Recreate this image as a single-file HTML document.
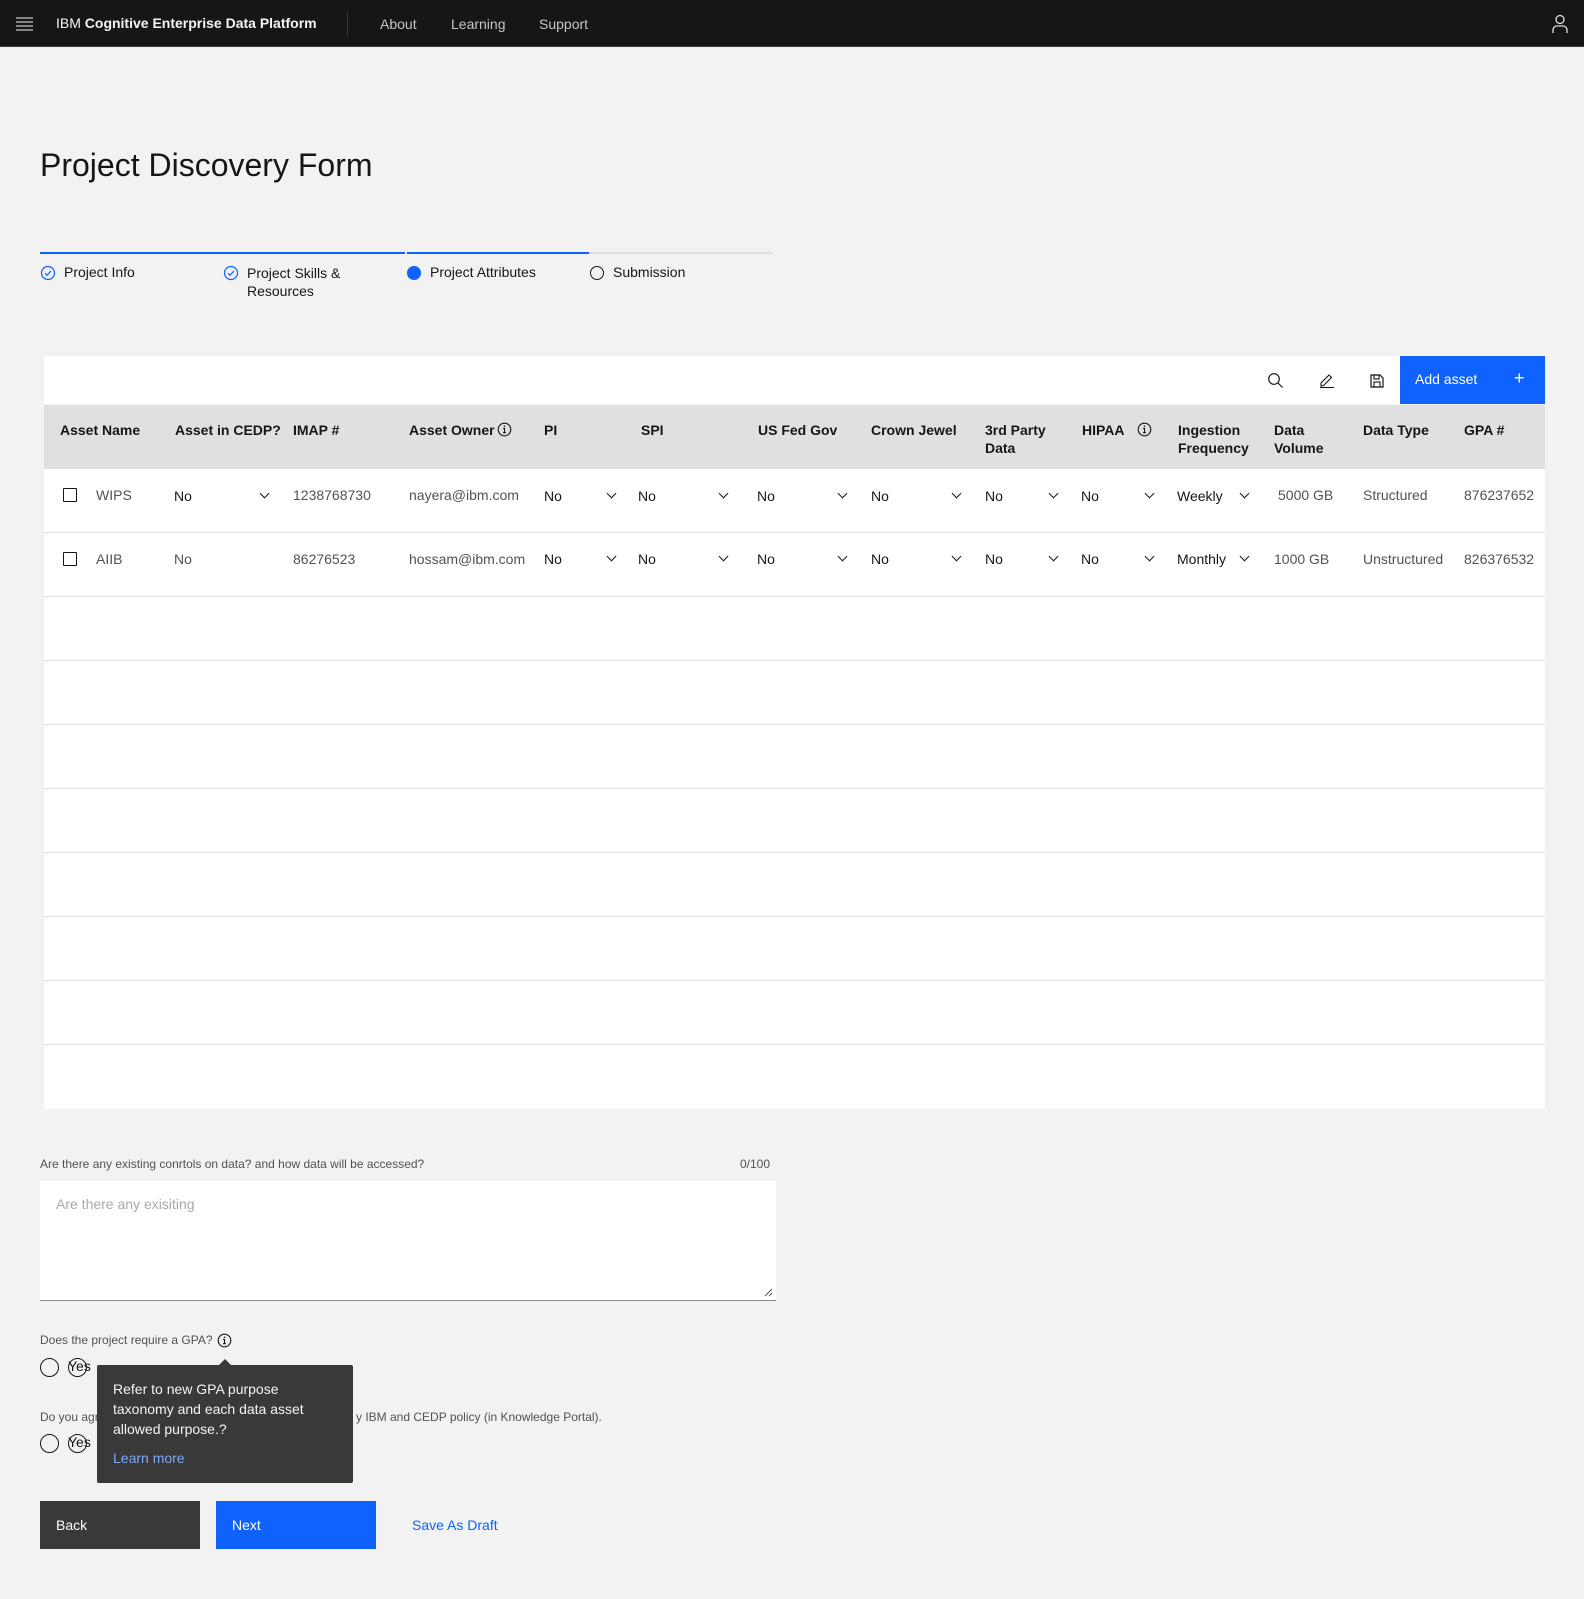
<!DOCTYPE html>
<html><head><meta charset="utf-8"><style>
*{box-sizing:border-box;margin:0;padding:0}
body{width:1584px;height:1599px;background:#f2f2f2;font-family:"Liberation Sans",sans-serif;color:#161616;position:relative;overflow:hidden}
.a{position:absolute;white-space:nowrap}
.hdr{position:absolute;left:0;top:0;width:1584px;height:47px;background:#161616;border-bottom:1px solid #393939}
.nav{color:#c6c6c6;font-size:14px;top:16px}
.th{font-size:14px;font-weight:bold;color:#161616;line-height:18px}
.td{font-size:14px;color:#525252}
.dd{font-size:14px;color:#161616}
.chev{position:absolute;width:7px;height:7px;border-right:1.3px solid #161616;border-bottom:1.3px solid #161616;transform:rotate(45deg)}
.row{position:absolute;left:44px;width:1501px;height:64px;background:#fff;border-bottom:1px solid #e0e0e0}
.cb{position:absolute;width:14px;height:14px;border:1.5px solid #161616;border-radius:1px}
.radio{position:absolute;width:19px;height:19px;border:1.5px solid #161616;border-radius:50%}
</style></head><body>
<div class="hdr">
 <svg class="a" style="left:16px;top:17px" width="18" height="14"><g stroke="#c6c6c6" stroke-width="1.2"><line x1="0" y1="1" x2="17" y2="1"/><line x1="0" y1="5" x2="17" y2="5"/><line x1="0" y1="9" x2="17" y2="9"/><line x1="0" y1="13" x2="17" y2="13"/></g></svg>
 <div class="a" style="left:56px;top:15px;color:#f4f4f4;font-size:14px">IBM <b>Cognitive Enterprise Data Platform</b></div>
 <div class="a" style="left:347px;top:12px;width:1px;height:24px;background:#393939"></div>
 <div class="a nav" style="left:380px">About</div>
 <div class="a nav" style="left:451px">Learning</div>
 <div class="a nav" style="left:539px">Support</div>
 <svg class="a" style="left:1551px;top:14px" width="18" height="20"><g fill="none" stroke="#e0e0e0" stroke-width="1.3"><circle cx="9" cy="5.5" r="4"/><path d="M2 19 v-3 a4 4 0 0 1 4-4 h6 a4 4 0 0 1 4 4 v3"/></g></svg>
</div>

<div class="a" style="left:40px;top:147px;font-size:32px;color:#161616">Project Discovery Form</div>

<div class="a" style="left:40px;top:252px;width:733px;height:2px;background:#e0e0e0"></div>
<div class="a" style="left:40px;top:252px;width:549px;height:2px;background:#0f62fe"></div>
<div class="a" style="left:405px;top:252px;width:2px;height:2px;background:#f2f2f2"></div>
<svg class="a" style="left:40px;top:265px" width="16" height="16"><circle cx="8" cy="8" r="6.5" fill="none" stroke="#0f62fe" stroke-width="1.2"/><path d="M5 8.3l2 2 4-4.2" fill="none" stroke="#0f62fe" stroke-width="1.2"/></svg>
<div class="a" style="left:64px;top:264px;font-size:14px">Project Info</div>
<svg class="a" style="left:223px;top:265px" width="16" height="16"><circle cx="8" cy="8" r="6.5" fill="none" stroke="#0f62fe" stroke-width="1.2"/><path d="M5 8.3l2 2 4-4.2" fill="none" stroke="#0f62fe" stroke-width="1.2"/></svg>
<div class="a" style="left:247px;top:264px;font-size:14px;line-height:18px">Project Skills &amp;<br>Resources</div>
<div class="a" style="left:407px;top:266px;width:14px;height:14px;border-radius:50%;background:#0f62fe"></div>
<div class="a" style="left:430px;top:264px;font-size:14px">Project Attributes</div>
<div class="a" style="left:590px;top:266px;width:14px;height:14px;border-radius:50%;border:1.3px solid #161616"></div>
<div class="a" style="left:613px;top:264px;font-size:14px">Submission</div>

<div class="a" style="left:44px;top:356px;width:1501px;height:48px;background:#fff"></div>
<svg class="a" style="left:1267px;top:372px" width="18" height="18"><circle cx="7" cy="7" r="5.3" fill="none" stroke="#161616" stroke-width="1.2"/><line x1="11" y1="11" x2="15.5" y2="15.5" stroke="#161616" stroke-width="1.2"/></svg>
<svg class="a" style="left:1318px;top:371px" width="18" height="18"><path d="M3 12 L11 4 L13.5 6.5 L5.5 14.5 L3 15 Z" fill="none" stroke="#161616" stroke-width="1.1"/><line x1="2" y1="16.5" x2="16" y2="16.5" stroke="#161616" stroke-width="1.1"/></svg>
<svg class="a" style="left:1369px;top:373px" width="16" height="16"><path d="M2 2h9l3 3v9H2z" fill="none" stroke="#161616" stroke-width="1.2"/><rect x="5" y="2" width="5" height="4" fill="none" stroke="#161616" stroke-width="1.1"/><rect x="5" y="9" width="6" height="5" fill="none" stroke="#161616" stroke-width="1.1"/></svg>
<div class="a" style="left:1400px;top:356px;width:145px;height:48px;background:#0f62fe"></div>
<div class="a" style="left:1415px;top:371px;font-size:14px;color:#fff">Add asset</div>
<div class="a" style="left:1514px;top:368px;font-size:18px;color:#fff;font-weight:300">+</div>

<div class="a" style="left:44px;top:405px;width:1501px;height:64px;background:#e0e0e0"></div>
<div class="a th" style="left:60px;top:421px">Asset Name</div>
<div class="a th" style="left:175px;top:421px">Asset in CEDP?</div>
<div class="a th" style="left:293px;top:421px">IMAP #</div>
<div class="a th" style="left:409px;top:421px">Asset Owner</div>
<svg class="a" style="left:497px;top:422px" width="15" height="15"><circle cx="7.5" cy="7.5" r="6.3" fill="none" stroke="#161616" stroke-width="1.1"/><path d="M6 6.5h1.5v4M6 10.7h3" fill="none" stroke="#161616" stroke-width="1.1"/><circle cx="7.5" cy="4.3" r=".8" fill="#161616"/></svg>
<div class="a th" style="left:544px;top:421px">PI</div>
<div class="a th" style="left:641px;top:421px">SPI</div>
<div class="a th" style="left:758px;top:421px">US Fed Gov</div>
<div class="a th" style="left:871px;top:421px">Crown Jewel</div>
<div class="a th" style="left:985px;top:421px">3rd Party<br>Data</div>
<div class="a th" style="left:1082px;top:421px">HIPAA</div>
<svg class="a" style="left:1137px;top:422px" width="15" height="15"><circle cx="7.5" cy="7.5" r="6.3" fill="none" stroke="#161616" stroke-width="1.1"/><path d="M6 6.5h1.5v4M6 10.7h3" fill="none" stroke="#161616" stroke-width="1.1"/><circle cx="7.5" cy="4.3" r=".8" fill="#161616"/></svg>
<div class="a th" style="left:1178px;top:421px">Ingestion<br>Frequency</div>
<div class="a th" style="left:1274px;top:421px">Data<br>Volume</div>
<div class="a th" style="left:1363px;top:421px">Data Type</div>
<div class="a th" style="left:1464px;top:421px">GPA #</div>

<div class="row" style="top:469px"></div>
<div class="row" style="top:533px"></div>
<div class="row" style="top:597px"></div>
<div class="row" style="top:661px"></div>
<div class="row" style="top:725px"></div>
<div class="row" style="top:789px"></div>
<div class="row" style="top:853px"></div>
<div class="row" style="top:917px"></div>
<div class="row" style="top:981px"></div>
<div class="row" style="top:1045px;border-bottom:none"></div>

<div class="cb" style="left:63px;top:488px"></div>
<div class="a td" style="left:96px;top:487px">WIPS</div>
<div class="a dd" style="left:174px;top:488px">No</div><div class="chev" style="left:261px;top:490px"></div>
<div class="a td" style="left:293px;top:487px">1238768730</div>
<div class="a td" style="left:409px;top:487px">nayera@ibm.com</div>
<div class="a dd" style="left:544px;top:488px">No</div><div class="chev" style="left:608px;top:490px"></div>
<div class="a dd" style="left:638px;top:488px">No</div><div class="chev" style="left:720px;top:490px"></div>
<div class="a dd" style="left:757px;top:488px">No</div><div class="chev" style="left:839px;top:490px"></div>
<div class="a dd" style="left:871px;top:488px">No</div><div class="chev" style="left:953px;top:490px"></div>
<div class="a dd" style="left:985px;top:488px">No</div><div class="chev" style="left:1050px;top:490px"></div>
<div class="a dd" style="left:1081px;top:488px">No</div><div class="chev" style="left:1146px;top:490px"></div>
<div class="a dd" style="left:1177px;top:488px">Weekly</div><div class="chev" style="left:1241px;top:490px"></div>
<div class="a td" style="left:1278px;top:487px">5000 GB</div>
<div class="a td" style="left:1363px;top:487px">Structured</div>
<div class="a td" style="left:1464px;top:487px">876237652</div>

<div class="cb" style="left:63px;top:552px"></div>
<div class="a td" style="left:96px;top:551px">AIIB</div>
<div class="a td" style="left:174px;top:551px">No</div>
<div class="a td" style="left:293px;top:551px">86276523</div>
<div class="a td" style="left:409px;top:551px">hossam@ibm.com</div>
<div class="a dd" style="left:544px;top:551px">No</div><div class="chev" style="left:608px;top:553px"></div>
<div class="a dd" style="left:638px;top:551px">No</div><div class="chev" style="left:720px;top:553px"></div>
<div class="a dd" style="left:757px;top:551px">No</div><div class="chev" style="left:839px;top:553px"></div>
<div class="a dd" style="left:871px;top:551px">No</div><div class="chev" style="left:953px;top:553px"></div>
<div class="a dd" style="left:985px;top:551px">No</div><div class="chev" style="left:1050px;top:553px"></div>
<div class="a dd" style="left:1081px;top:551px">No</div><div class="chev" style="left:1146px;top:553px"></div>
<div class="a dd" style="left:1177px;top:551px">Monthly</div><div class="chev" style="left:1241px;top:553px"></div>
<div class="a td" style="left:1274px;top:551px">1000 GB</div>
<div class="a td" style="left:1363px;top:551px">Unstructured</div>
<div class="a td" style="left:1464px;top:551px">826376532</div>

<div class="a" style="left:40px;top:1157px;font-size:12px;color:#525252">Are there any existing conrtols on data? and how data will be accessed?</div>
<div class="a" style="left:740px;top:1157px;font-size:12px;color:#525252">0/100</div>
<div class="a" style="left:40px;top:1181px;width:736px;height:120px;background:#fff;border-bottom:1px solid #8d8d8d"></div>
<div class="a" style="left:56px;top:1196px;font-size:14px;color:#a8a8a8">Are there any exisiting</div>
<svg class="a" style="left:764px;top:1288px" width="9" height="9"><path d="M1 8L8 1M5 8L8 5" stroke="#525252" stroke-width="1"/></svg>

<div class="a" style="left:40px;top:1333px;font-size:12px;color:#525252">Does the project require a GPA?</div>
<svg class="a" style="left:217px;top:1333px" width="15" height="15"><circle cx="7.5" cy="7.5" r="6.3" fill="none" stroke="#161616" stroke-width="1.1"/><path d="M6 6.5h1.5v4M6 10.7h3" fill="none" stroke="#161616" stroke-width="1.1"/><circle cx="7.5" cy="4.3" r=".8" fill="#161616"/></svg>
<div class="radio" style="left:40px;top:1358px"></div>
<div class="radio" style="left:68px;top:1358px;border-width:1.2px"></div>
<div class="a" style="left:68px;top:1358px;font-size:14px">Yes</div>
<div class="a" style="left:40px;top:1410px;font-size:12px;color:#525252">Do you agr</div>
<div class="a" style="left:356px;top:1410px;font-size:12px;color:#525252">y IBM and CEDP policy (in Knowledge Portal).</div>
<div class="radio" style="left:40px;top:1434px"></div>
<div class="radio" style="left:68px;top:1434px;border-width:1.2px"></div>
<div class="a" style="left:68px;top:1434px;font-size:14px">Yes</div>

<div class="a" style="left:97px;top:1365px;width:256px;height:118px;background:#393939;border-radius:2px"></div>
<div class="a" style="left:219px;top:1359px;width:0;height:0;border-left:6px solid transparent;border-right:6px solid transparent;border-bottom:6px solid #393939"></div>
<div class="a" style="left:113px;top:1379px;font-size:14px;line-height:20px;color:#f4f4f4">Refer to new GPA purpose<br>taxonomy and each data asset<br>allowed purpose.?</div>
<div class="a" style="left:113px;top:1450px;font-size:14px;color:#78a9ff">Learn more</div>

<div class="a" style="left:40px;top:1501px;width:160px;height:48px;background:#393939"></div>
<div class="a" style="left:56px;top:1517px;font-size:14px;color:#fff">Back</div>
<div class="a" style="left:216px;top:1501px;width:160px;height:48px;background:#0f62fe"></div>
<div class="a" style="left:232px;top:1517px;font-size:14px;color:#fff">Next</div>
<div class="a" style="left:412px;top:1517px;font-size:14px;color:#0f62fe">Save As Draft</div>
</body></html>
